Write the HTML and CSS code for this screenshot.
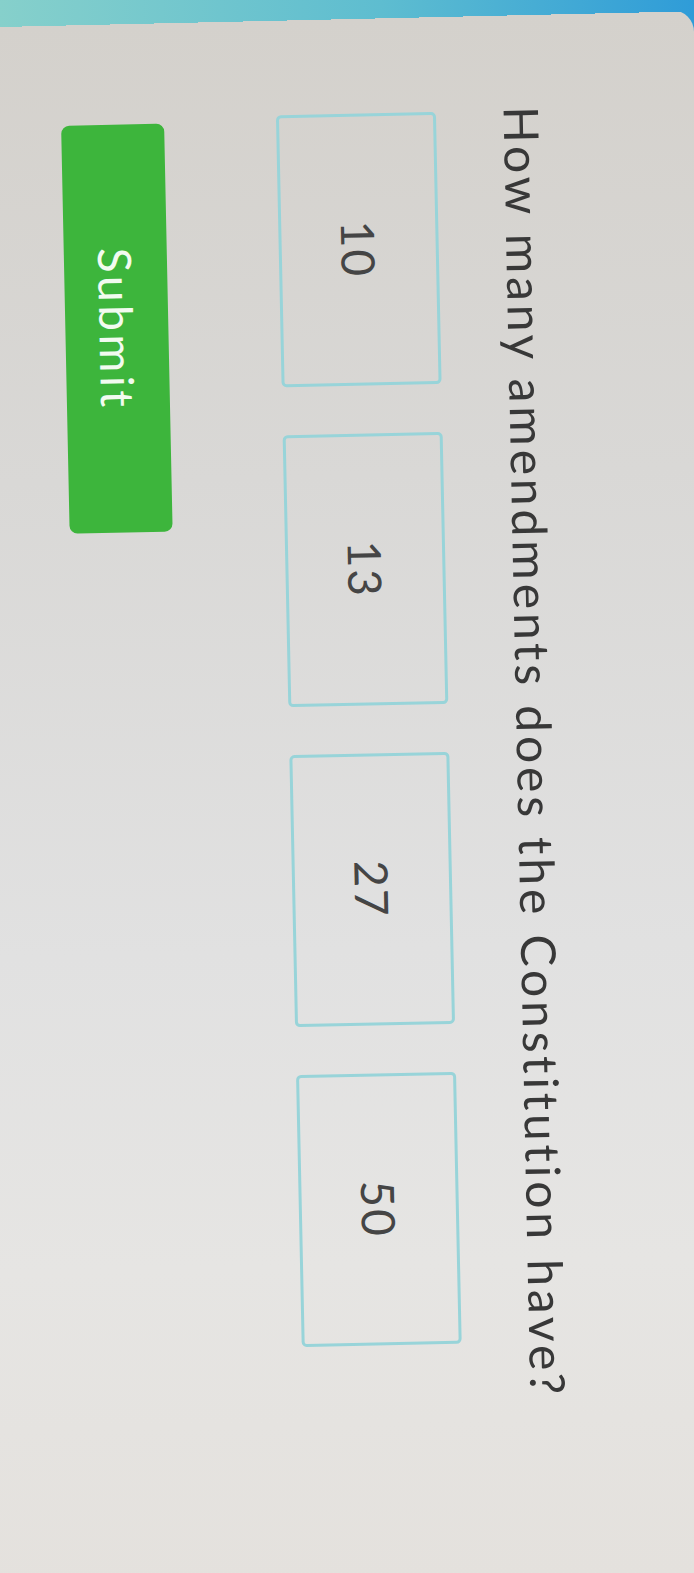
FILE: index.html
```html
<!DOCTYPE html>
<html lang="en">
<head>
<meta charset="utf-8">
<title>Question</title>
<link rel="stylesheet" href="styles.css">
</head>
<body>
<div class="card">
  <div class="content">
    <p class="question">How many amendments does the Constitution have?</p>
    <div class="options">
      <div class="option">10</div>
      <div class="option">13</div>
      <div class="option">27</div>
      <div class="option">50</div>
    </div>
    <div class="submit">Submit</div>
  </div>
</div>
</body>
</html>
```
FILE: styles.css
```css
html, body {
  margin: 0;
  padding: 0;
}
body {
  width: 694px;
  height: 1573px;
  box-sizing: border-box;
  padding-top: 10px;
  overflow: hidden;
  background: linear-gradient(90deg, #86d0cb 0%, #5ebdd0 55%, #2f9cd8 100%);
  font-family: Lato, "Open Sans", sans-serif;
}
.card {
  width: 694px;
  height: 1563px;
  box-sizing: border-box;
  border-top-right-radius: 22px;
  background: linear-gradient(178.7deg, transparent 0, transparent 17px, #d4d1cc 17px, #d9d8d6 30%, #e1e1e1 60%, #e6e5e3 80%, #e4e1dd 100%);
  writing-mode: vertical-rl;
  padding-right: 129px;
  padding-top: 100px;
}
.content {
  inline-size: max-content;
  transform: rotate(-1.2deg);
  transform-origin: 272px 676px;
}
.question {
  margin: 0;
  font-size: 48px;
  line-height: 1.2;
  letter-spacing: 3.9px;
  color: #383838;
}
.options {
  display: flex;
  gap: 48px;
  margin-block-start: 57px;
  margin-inline-start: 4px;
}
.option {
  inline-size: 272px;
  block-size: 160px;
  box-sizing: border-box;
  border: 3px solid #98d4d9;
  border-radius: 5px;
  display: flex;
  align-items: center;
  justify-content: center;
  font-size: 46px;
  line-height: 1.2;
  letter-spacing: 2px;
  color: #454545;
}
.submit {
  margin-block-start: 112px;
  margin-inline-start: 10px;
  inline-size: 408px;
  block-size: 103px;
  box-sizing: border-box;
  border-radius: 8px;
  background: #3db53c;
  color: #f2fbf0;
  font-size: 46px;
  line-height: 1.2;
  letter-spacing: 3.6px;
  display: flex;
  align-items: center;
  justify-content: center;
}
```
